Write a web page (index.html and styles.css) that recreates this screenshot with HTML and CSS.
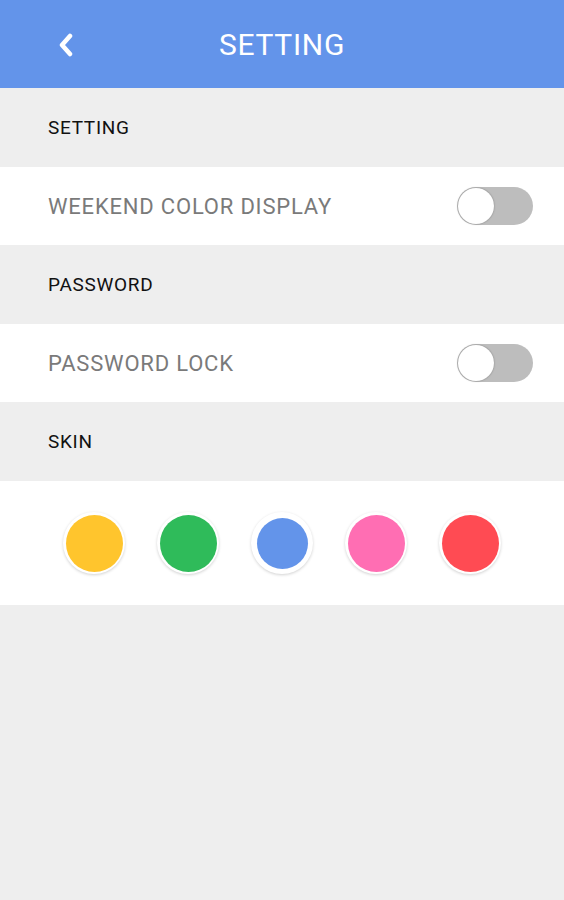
FILE: index.html
```html
<html>
    <head>
        <link rel="stylesheet" href="styles.css">
    </head>
    <body>
        <div class="topbar">
            <div class="back">
                <svg width="16" height="24" viewBox="0 0 16 24">
                    <polyline points="12,3 4,12 12,21" fill="none" stroke="#fff" stroke-width="4.5" stroke-linecap="round" stroke-linejoin="round"/>
                </svg>
            </div>
            <div class="title">SETTING</div>
        </div>

        <div class="group-label">SETTING</div>
        <div class="row">
            <span class="row-text">WEEKEND COLOR DISPLAY</span>
            <div class="switch"><div class="knob"></div></div>
        </div>

        <div class="group-label">PASSWORD</div>
        <div class="row">
            <span class="row-text">PASSWORD LOCK</span>
            <div class="switch"><div class="knob"></div></div>
        </div>

        <div class="group-label">SKIN</div>
        <div class="skins">
            <div class="skin"><div class="dot yellow"></div></div>
            <div class="skin"><div class="dot green"></div></div>
            <div class="skin selected"><div class="dot blue"></div></div>
            <div class="skin"><div class="dot pink"></div></div>
            <div class="skin"><div class="dot red"></div></div>
        </div>
    </body>
</html>
```

FILE: styles.css
```css
body {
    margin: 0;
    background-color: #eeeeee;
    font-family: Roboto, "Liberation Sans", sans-serif;
}
.topbar {
    height: 88px;
    background-color: #6394ea;
    display: flex;
    align-items: center;
    position: relative;
}
.back {
    width: 16px;
    height: 24px;
    margin-left: 58px;
    margin-top: 1px;
}
.title {
    position: absolute;
    left: 0;
    right: 0;
    top: 27px;
    text-align: center;
    color: #fff;
    font-size: 30px;
    letter-spacing: 0.7px;
    pointer-events: none;
}
.group-label {
    height: 79px;
    box-sizing: border-box;
    padding-left: 48px;
    display: flex;
    align-items: center;
    font-size: 19px;
    letter-spacing: 0.7px;
    color: #111;
}
.row {
    height: 78px;
    background-color: #fff;
    display: flex;
    align-items: center;
    justify-content: space-between;
    padding: 0 31px 0 48px;
}
.row-text {
    font-size: 22px;
    letter-spacing: 0.8px;
    color: #7a7a7a;
}
.switch {
    width: 76px;
    height: 38px;
    border-radius: 19px;
    background-color: #bdbdbd;
    display: flex;
    align-items: center;
}
.knob {
    width: 36px;
    height: 36px;
    border-radius: 50%;
    background-color: #fff;
    margin-left: 1px;
    box-shadow: 0 0 2px rgba(0,0,0,0.35);
}
.skins {
    height: 124px;
    background-color: #fff;
    display: flex;
    align-items: center;
    justify-content: center;
    gap: 32px;
}
.skin {
    width: 62px;
    height: 62px;
    border-radius: 50%;
    background-color: #fff;
    box-shadow: 0 1px 3px rgba(0,0,0,0.18);
    display: flex;
    align-items: center;
    justify-content: center;
}
.dot {
    width: 57px;
    height: 57px;
    border-radius: 50%;
}
.selected .dot {
    width: 51px;
    height: 51px;
}
.yellow { background-color: #ffc52d; }
.green { background-color: #2fbb5a; }
.blue { background-color: #6394ea; }
.pink { background-color: #ff6eb3; }
.red { background-color: #ff4b53; }
```
